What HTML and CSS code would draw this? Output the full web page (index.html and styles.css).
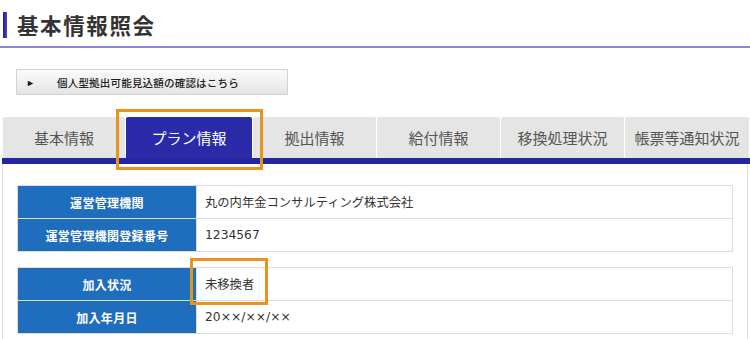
FILE: index.html
```html
<!DOCTYPE html>
<html lang="ja">
<head>
<meta charset="utf-8">
<link rel="stylesheet" href="styles.css">
</head>
<body>
<div class="page">
  <h1 class="title"><span class="title-bar"></span><span class="title-text">基本情報照会</span></h1>
  <div class="btn-row">
    <a class="link-btn"><span class="arrow">►</span><span class="btn-text">個人型拠出可能見込額の確認はこちら</span></a>
  </div>
  <div class="tabs-wrap">
    <ul class="tabs">
      <li class="tab">基本情報</li>
      <li class="tab active">プラン情報</li>
      <li class="tab">拠出情報</li>
      <li class="tab">給付情報</li>
      <li class="tab">移換処理状況</li>
      <li class="tab">帳票等通知状況</li>
    </ul>
    <div class="tab-line"></div>
    <div class="hl hl-tab"></div>
  </div>
  <div class="panel">
    <table class="info">
      <tr><th>運営管理機関</th><td>丸の内年金コンサルティング株式会社</td></tr>
      <tr><th>運営管理機関登録番号</th><td>1234567</td></tr>
    </table>
    <div class="table2-wrap">
      <table class="info">
        <tr><th>加入状況</th><td>未移換者</td></tr>
        <tr><th>加入年月日</th><td>20××/××/××</td></tr>
      </table>
      <div class="hl hl-cell"></div>
    </div>
  </div>
</div>
</body>
</html>
```
FILE: styles.css
```css
* { box-sizing: border-box; }
html, body { margin: 0; padding: 0; background: #fff; }
body {
  font-family: "Noto Sans CJK JP", "Noto Sans", sans-serif;
  color: #333;
  width: 750px;
  height: 339px;
  overflow: hidden;
}
.page { position: relative; }
.title {
  margin: 0;
  padding: 12px 0 0 3px;
  height: 48px;
  display: flex;
  align-items: flex-start;
  border-bottom: 2px solid #8585d3;
}
.title-bar {
  width: 4px;
  height: 26px;
  background: linear-gradient(to right, #1c1c9a, #4848c4);
  flex: none;
}
.title-text {
  margin-left: 10px;
  font-size: 21.5px;
  font-weight: bold;
  line-height: 26px;
  color: #333;
  letter-spacing: 1.6px;
}
.btn-row { padding: 21px 0 0 16px; height: 47px; }
.link-btn {
  display: flex;
  align-items: center;
  width: 272px;
  height: 26px;
  border: 1px solid #d2d2d2;
  background: linear-gradient(to bottom, #fbfbfb, #e4e4e4);
  font-size: 10.5px;
  color: #222;
}
.arrow { font-size: 9px; margin-left: 9px; width: 31px; color: #111; }
.btn-text { letter-spacing: 0.2px; font-weight: 500; }
.tabs-wrap { position: relative; padding: 22px 0 0 3px; }
.tabs {
  list-style: none;
  margin: 0;
  padding: 0;
  width: 746px;
  display: grid;
  grid-template-columns: 122px 126px 123px 123px 123px 124px;
  column-gap: 1px;
}
.tab {
  height: 41px;
  display: flex;
  align-items: center;
  justify-content: center;
  background: #e5e5e5;
  color: #555;
  font-size: 15px;
  border-radius: 2px 2px 0 0;
}
.tab.active { background: #2b2ba9; color: #fff; }
.tab-line { height: 6px; background: #2525a2; width: 748px; margin-left: -1px; }
.hl { position: absolute; border: 3px solid #e6941c; }
.hl-tab { left: 116px; top: 14px; width: 147px; height: 61px; }
.panel {
  margin-left: 2px;
  width: 746px;
  border-left: 1px solid #dedede;
  border-right: 1px solid #dedede;
  padding: 21px 13px 6px 14px;
}
.info {
  width: 716px;
  border-collapse: collapse;
}
.info th {
  width: 179px;
  background: #1f6dbd;
  color: #fff;
  font-size: 12px;
  font-weight: bold;
  height: 33px;
  border: 1px solid #dcdcdc;
  letter-spacing: 0.3px;
}
.info td {
  height: 33px;
  border: 1px solid #dcdcdc;
  padding: 0 8px;
  font-family: "DejaVu Sans", "Noto Sans CJK JP", sans-serif;
  font-size: 12.3px;
  color: #333;
}
.table2-wrap { position: relative; margin-top: 15px; }
.hl-cell { left: 173px; top: -9px; width: 78px; height: 47px; }
```
